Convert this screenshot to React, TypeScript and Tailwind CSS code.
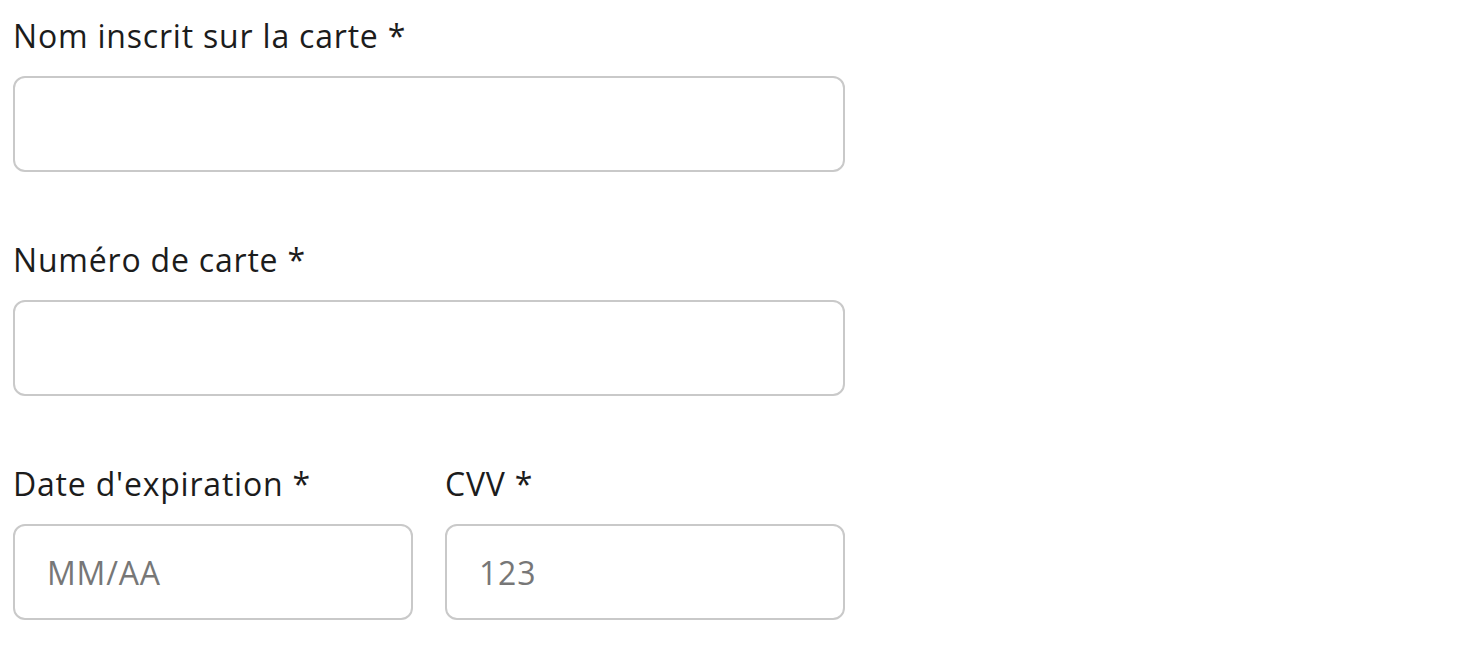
import React from 'react'

function Field({ label, placeholder }: { label: string; placeholder?: string }) {
  return (
    <div className="flex flex-col w-full">
      <label className="text-[32px] leading-[36px] tracking-[0.025em] text-[#1c1c1c] mb-[22px] whitespace-nowrap">{label}</label>
      <input
        type="text"
        placeholder={placeholder}
        className="h-[96px] w-full rounded-[12px] border-2 border-[#c9c9c9] bg-white px-[32px] text-[32px] tracking-[0.025em] text-[#1c1c1c] placeholder:text-[#777777] outline-none"
      />
    </div>
  )
}

export default function App() {
  return (
    <div className="min-h-screen bg-white pt-[18px] pl-[13px]" style={{ fontFamily: '"Open Sans", "Liberation Sans", sans-serif' }}>
      <form className="w-[832px] flex flex-col gap-[70px]">
        <Field label="Nom inscrit sur la carte *" />
        <Field label="Numéro de carte *" />
        <div className="flex gap-[32px]">
          <Field label="Date d'expiration *" placeholder="MM/AA" />
          <Field label="CVV *" placeholder="123" />
        </div>
      </form>
    </div>
  )
}
